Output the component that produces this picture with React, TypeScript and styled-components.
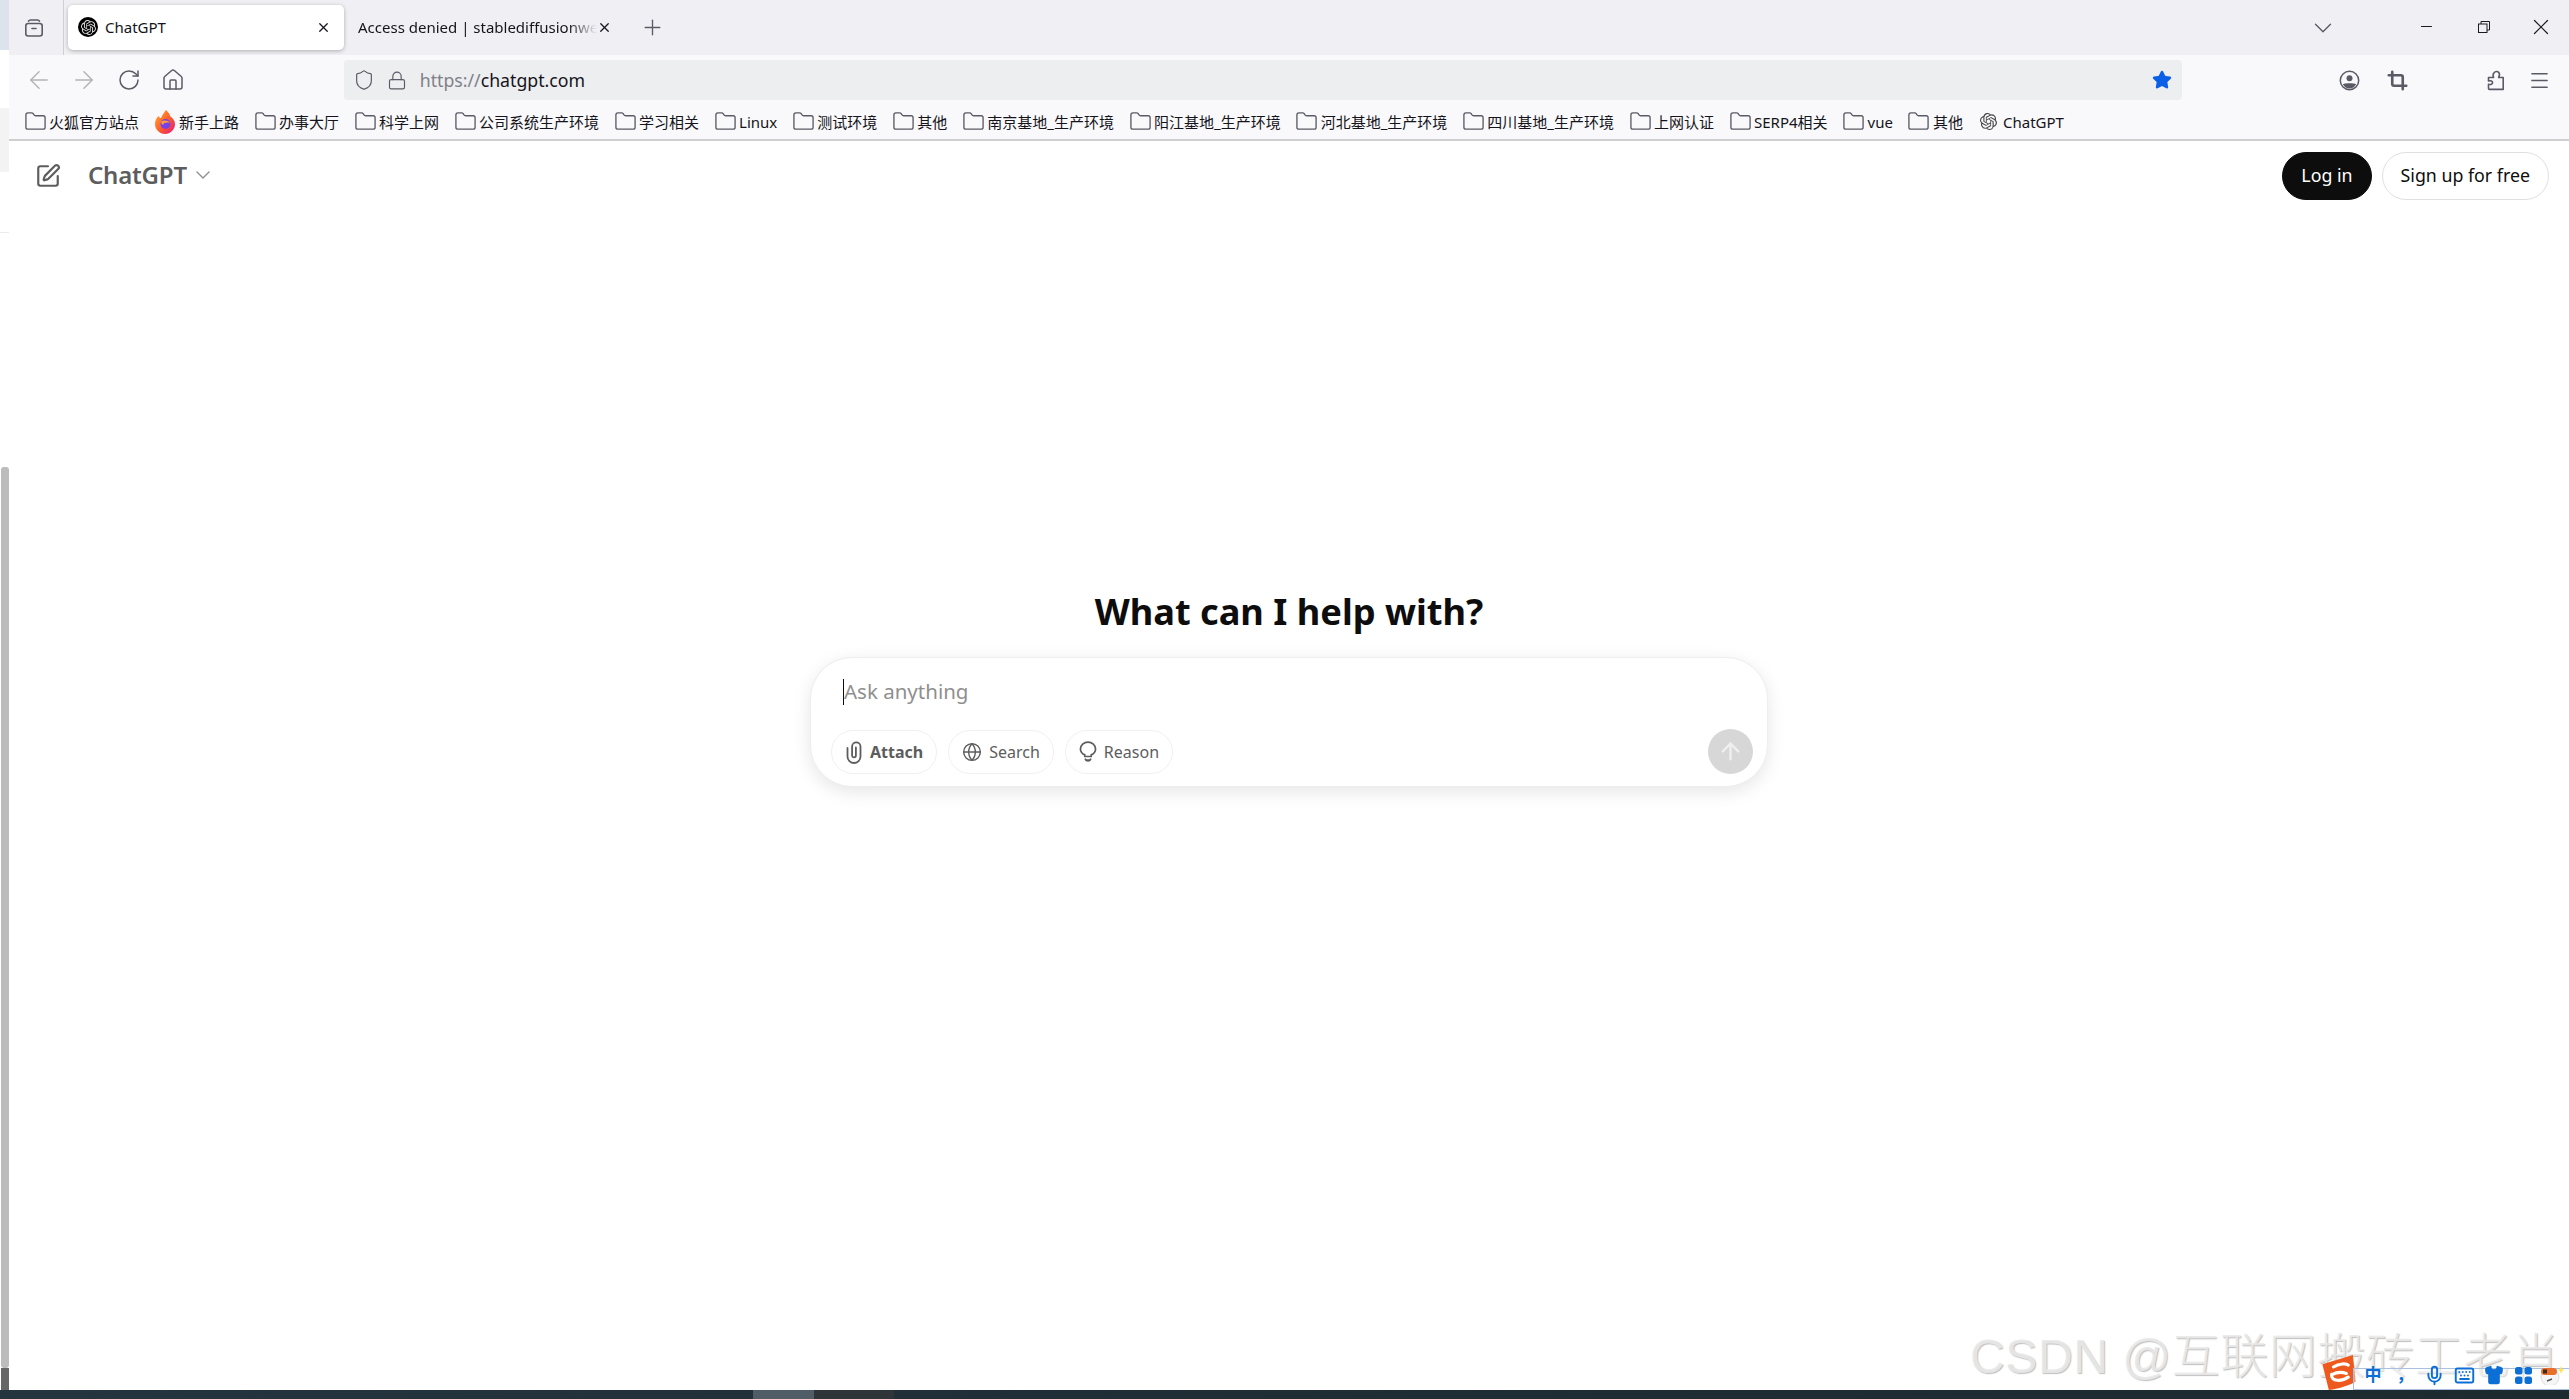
import React from "react";
import styled, { createGlobalStyle } from "styled-components";
import {
  ArrowLeft, ArrowRight, RotateCw, House, Shield, Lock, Star, Crop, Menu, Folder,
  ChevronDown, X, Plus, Minus, Globe, ArrowUp, SquarePen, Mic, Keyboard, Shirt,
} from "lucide-react";
import { SiOpenai } from "react-icons/si";

const Global = createGlobalStyle`
  html, body { margin: 0; padding: 0; background: #fff; overflow: hidden; }
  * { box-sizing: border-box; }
  body { font-family: "Noto Sans", "Noto Sans CJK SC", sans-serif; color: #15141a; }
`;

const Screen = styled.div`
  position: relative; width: 2569px; height: 1399px; display: flex; flex-direction: column; overflow: hidden;
`;
const Desktop = styled.div`display: flex; height: 1390px;`;
const Strip = styled.div`width: 9px; display: flex; flex-direction: column; flex: none;`;
const StripPart = styled.div<{ $h: number; $bg: string; $inset?: boolean; $round?: boolean }>`
  height: ${(p) => p.$h}px; background: ${(p) => p.$bg};
  margin-left: ${(p) => (p.$inset ? 1 : 0)}px;
  border-top-right-radius: ${(p) => (p.$round ? 6 : 0)}px;
`;
const ScrollThumb = styled.div`
  margin-left: 1px; height: 901px; background: #bcbcbc; border-radius: 3px;
`;
const Window = styled.div`flex: 1; display: flex; flex-direction: column; min-width: 0;`;

const TabBar = styled.div`height: 55px; background: #f0f0f4; display: flex; align-items: flex-start;`;
const TabMenu = styled.div`
  width: 55px; height: 55px; border-right: 1px solid #cfcfd8; display: flex; align-items: center; justify-content: center;
  color: #5b5b66; padding-right: 4px; flex: none;
`;
const Tab = styled.div<{ $active?: boolean }>`
  height: 45px; margin-top: 5px; display: flex; align-items: center; flex: none; font-size: 15px;
  width: ${(p) => (p.$active ? 276 : 274)}px;
  margin-left: ${(p) => (p.$active ? 4 : 0)}px;
  padding: ${(p) => (p.$active ? "0 13px 1px 10px" : "0 6px 1px 14px")};
  background: ${(p) => (p.$active ? "#fff" : "transparent")};
  border-radius: 5px;
  box-shadow: ${(p) => (p.$active ? "0 1px 4px rgba(0,0,0,.28)" : "none")};
`;
const Favicon = styled.span`
  width: 20px; height: 20px; border-radius: 50%; background: #000; color: #ddd; display: flex; align-items: center;
  justify-content: center; margin-right: 7px; flex: none;
`;
const TabTitle = styled.span<{ $fade?: boolean }>`
  flex: 1; white-space: nowrap; overflow: hidden; color: #15141a;
  ${(p) => p.$fade && "mask-image: linear-gradient(to right, #000 88%, transparent 100%);"}
`;
const NewTab = styled.div`
  width: 40px; height: 55px; margin-left: 14px; display: flex; align-items: center; justify-content: center; color: #5b5b66;
`;
const Grow = styled.div`flex: 1;`;
const ListTabs = styled.div`
  width: 40px; height: 55px; margin-right: 55px; display: flex; align-items: center; justify-content: center; color: #5b5b66;
`;
const WinControl = styled.div`
  width: 57px; height: 53px; display: flex; align-items: center; justify-content: center; color: #1a1a1a; flex: none;
`;

const NavBar = styled.div`height: 45px; background: #f9f9fb; display: flex; align-items: flex-end; padding: 0 2px 0 8px;`;
const NavButton = styled.div<{ $dim?: boolean; $w?: number }>`
  width: ${(p) => p.$w ?? 44.7}px; height: 40px; display: flex; align-items: center; justify-content: center; flex: none;
  color: ${(p) => (p.$dim ? "#b4b4b9" : "#5b5b66")};
`;
const Address = styled.div`
  width: 1838px; height: 40px; margin-left: 148px; background: #edeef0; border-radius: 4px; display: flex; align-items: center;
  padding: 0 10px 0 9px; color: #5b5b66; flex: none;
`;
const Url = styled.div`font-size: 17.7px; margin-left: 13px; flex: 1; color: #15141a;`;
const UrlScheme = styled.span`color: #80808a;`;
const AddrIcon = styled.span<{ $w: number }>`width: ${(p) => p.$w}px; display: flex; justify-content: center; flex: none;`;
const RightIcons = styled.div`display: flex; margin-left: 144px; align-items: center;`;

const Bookmarks = styled.div`
  height: 41px; background: #f9f9fb; border-bottom: 2px solid #cfcfd2; display: flex; align-items: center; gap: 16px; padding: 4px 0 0 16px;
`;
const Bookmark = styled.div`display: flex; align-items: center; gap: 4px; font-size: 15px; color: #15141a; white-space: nowrap; line-height: 20px;`;
const FolderIcon = styled(Folder)`color: #5b5b66; flex: none; margin: 0 -1.5px;`;
const BookmarkGlyph = styled.span`width: 20px; height: 20px; display: flex; align-items: center; justify-content: center; color: #444; flex: none;`;

const Page = styled.main`flex: 1; background: #fff; display: flex; flex-direction: column;`;
const Header = styled.header`display: flex; align-items: center; height: 48px; margin-top: 11px; padding: 0 20px 0 26px;`;
const EditButton = styled.div`width: 26px; color: #5d5d5d; display: flex; align-items: center; justify-content: center;`;
const ModelName = styled.div`
  margin-left: 27px; font-size: 24px; font-weight: 600; line-height: 32px; padding-bottom: 2px; color: #5d5d5d; display: flex; align-items: center; gap: 4px; letter-spacing: -0.2px;
`;
const Pill = styled.button<{ $dark?: boolean }>`
  height: 48px; border-radius: 24px; font: inherit; font-size: 17.8px; line-height: 22px; padding: 0 18px 3px; margin-left: 10px; cursor: pointer;
  background: ${(p) => (p.$dark ? "#0d0d0d" : "#fff")};
  color: ${(p) => (p.$dark ? "#fff" : "#0d0d0d")};
  border: 1px solid ${(p) => (p.$dark ? "#0d0d0d" : "#e0e0e0")};
`;
const Hero = styled.section`display: flex; flex-direction: column; align-items: center; padding-top: 386px;`;
const Heading = styled.h1`margin: 0 0 21px; font-size: 36.2px; line-height: 50px; font-weight: 700; color: #0d0d0d;`;
const Composer = styled.div`
  width: 958px; height: 130px; background: #fff; border: 1px solid #eeeeee; border-radius: 42px; position: relative;
  box-shadow: 0 5px 18px rgba(0,0,0,.1); padding: 21px 14px 0 20px; display: flex; flex-direction: column;
`;
const Prompt = styled.div`
  height: 26px; margin-left: 12px; border-left: 1px solid #0d0d0d; font-size: 20.5px; line-height: 24px; padding-bottom: 2px; color: #8f8f8f; display: flex; align-items: center;
`;
const Actions = styled.div`display: flex; align-items: center; margin-top: 24px;`;
const Chip = styled.div<{ $strong?: boolean }>`
  height: 44px; border: 1px solid #f1f1f1; border-radius: 22px; display: flex; align-items: center; gap: 7px; padding: 0 13px; margin-right: 11px;
  font-size: 16px; color: #5d5d5d; font-weight: ${(p) => (p.$strong ? 700 : 400)};
`;
const Send = styled.div`
  width: 45px; height: 45px; border-radius: 50%; background: #d7d7d7; color: #f0f0f0; margin-left: auto; display: flex; align-items: center; justify-content: center;
`;

const Taskbar = styled.footer`
  height: 9px; display: flex; background: linear-gradient(to right, #25353f, #1f2d35 50%, #1d2a30); overflow: hidden; position: relative;
`;
const TaskGap = styled.div<{ $w: number; $bg?: string }>`width: ${(p) => p.$w}px; background: ${(p) => p.$bg ?? "transparent"}; flex: none;`;
const Clock = styled.div`
  position: absolute; left: 2505px; top: 7px; color: #fff; font-size: 13px; line-height: 14px; letter-spacing: 1px;
`;

const Watermark = styled.div`
  position: absolute; left: 1970px; top: 1326px; font-size: 48px; line-height: 62px; white-space: nowrap; font-weight: 300;
  font-family: "Liberation Sans", "Noto Sans CJK SC", sans-serif; color: rgba(234,234,234,.9);
  text-shadow: 1px 1px 1px rgba(130,130,130,.5); letter-spacing: 0.6px;
`;
const ImeBar = styled.div`
  position: absolute; left: 2353px; top: 1368px; width: 216px; height: 22px; border: 1px solid #a9c0e0; border-right: none;
  background: rgba(255,255,255,.35); display: flex; align-items: center; padding: 0 0 8px 9px; color: #0c6fd6;
`;
const ImeSlot = styled.span<{ $w: number }>`
  width: ${(p) => p.$w}px; display: flex; justify-content: center; font-size: 17px; line-height: 18px; font-weight: 700; flex: none;
`;
const ImeLogo = styled.div`position: absolute; left: 2320px; top: 1354px; width: 38px; height: 37px;`;

const ArchiveIcon = () => (
  <svg width="20" height="20" viewBox="0 0 20 20" fill="none" stroke="currentColor" strokeWidth="1.6">
    <path d="M4.5 3.2 C5 2.4 5.6 2 6.5 2 H13.5 C14.4 2 15 2.4 15.5 3.2" strokeLinecap="round" />
    <rect x="1.8" y="5.5" width="16.4" height="12.5" rx="2.4" />
    <path d="M8 10.5 H12" strokeLinecap="round" />
  </svg>
);
const RestoreIcon = () => (
  <svg width="12" height="12" viewBox="0 0 12 12" fill="none" stroke="currentColor" strokeWidth="1">
    <rect x="0.5" y="3" width="8.5" height="8.5" />
    <path d="M3 3 V0.5 H11.5 V9 H9" />
  </svg>
);
const AccountIcon = () => (
  <svg width="21" height="21" viewBox="0 0 21 21" fill="none">
    <circle cx="10.5" cy="10.5" r="9.2" stroke="currentColor" strokeWidth="1.5" />
    <circle cx="10.5" cy="8.3" r="3" fill="currentColor" />
    <path d="M3.8 14.2 C6 12.8 15 12.8 17.2 14.2 C15.8 17 13 18.4 10.5 18.4 C8 18.4 5.2 17 3.8 14.2 Z" fill="currentColor" />
  </svg>
);
const PuzzleIcon = () => (
  <svg width="18" height="21" viewBox="0 0 18 21" fill="none" stroke="currentColor" strokeWidth="1.6" strokeLinejoin="round">
    <path d="M1.5 7.5 H6.6 C5.8 5.8 5.9 4 7 2.7 C8.2 1.2 10.6 1 11.8 2.6 C12.8 3.9 12.6 5.8 11.6 7.5 H16.2 V19.4 H2.4 C1.8 19.4 1.5 19 1.5 18.5 V14.2 C3.8 15 5.6 14 5.6 12.6 C5.6 11.2 3.8 10.4 1.5 11 Z" />
  </svg>
);
const ClipIcon = () => (
  <svg width="18" height="24" viewBox="0 0 18 24" fill="none" stroke="currentColor" strokeWidth="1.8" strokeLinecap="round">
    <path d="M2.5 8 V16.5 A6.5 6.5 0 0 0 15.5 16.5 V6.5 A4.2 4.2 0 0 0 7.1 6.5 V15.5 A1.9 1.9 0 0 0 10.9 15.5 V7.5" />
  </svg>
);
const BulbIcon = () => (
  <svg width="18" height="22" viewBox="0 0 20 24" fill="none" stroke="currentColor" strokeWidth="1.9" strokeLinecap="round" strokeLinejoin="round">
    <path d="M6.4 17 V15.2 C3.6 13.8 1.6 11.4 1.6 8.6 A8.4 7.6 0 0 1 18.4 8.6 C18.4 11.4 16.4 13.8 13.6 15.2 V17 Z" />
    <path d="M7 20 C8 22.6 12 22.6 13 20" fill="currentColor" />
  </svg>
);
const FirefoxIcon = () => (
  <svg width="20" height="24" viewBox="0 0 20 24">
    <defs>
      <linearGradient id="fx" x1="0" y1="0" x2="1" y2="1">
        <stop offset="0" stopColor="#ffb02e" />
        <stop offset="0.55" stopColor="#ff5a2c" />
        <stop offset="1" stopColor="#e31587" />
      </linearGradient>
    </defs>
    <path d="M11 0 C13 2 15 4 15 6 C18 8 20 11 20 14 C20 19.5 15.5 24 10 24 C4.5 24 0 19.5 0 14 C0 10 2 7 4 6 C4 7.5 5 8 6 8 C7 5 9 3 11 0 Z" fill="url(#fx)" />
    <circle cx="10.5" cy="14" r="5" fill="#7542e5" />
    <path d="M6 12 C8 10 13 10 15 13 C12 12 9 12.5 8 15 C7 14.5 6.4 13.5 6 12 Z" fill="#ff9a3c" />
  </svg>
);
const ImeMark = () => (
  <svg width="38" height="37" viewBox="0 0 38 40">
    <path d="M1 11 L34 1 L37 30 C26 36 14 38 8 39 Z" fill="#ee5a1e" />
    <path d="M13 14 C19 10 27 10 29 12 M11 22 C10 30 22 30 29 25 M12 22 C18 19 24 20 27 21" fill="none" stroke="#fff" strokeWidth="3.4" strokeLinecap="round" />
  </svg>
);
const GridIcon = () => (
  <svg width="17" height="17" viewBox="0 0 17 17" fill="currentColor">
    <rect x="0" y="0" width="7.5" height="7.5" rx="2.5" /><rect x="9.5" y="0" width="7.5" height="7.5" rx="2.5" />
    <rect x="0" y="9.5" width="7.5" height="7.5" rx="2.5" /><rect x="9.5" y="9.5" width="7.5" height="7.5" rx="2.5" />
  </svg>
);
const FoxIcon = () => (
  <svg width="26" height="20" viewBox="0 0 26 20">
    <circle cx="12" cy="12" r="9" fill="#f5f5f5" stroke="#ddd" />
    <rect x="3" y="3" width="16" height="7" rx="3.5" fill="#e8702a" />
    <rect x="5" y="4.5" width="4" height="4" fill="#3a2b20" />
    <path d="M23 1 L24 4 L26 5 L24 6 L23 9 L22 6 L20 5 L22 4 Z" fill="#ffe14d" />
    <path d="M9 16 L14 14" stroke="#555" strokeWidth="1.4" />
  </svg>
);

const folders = [
  "火狐官方站点", "*新手上路", "办事大厅", "科学上网", "公司系统生产环境", "学习相关", "Linux", "测试环境", "其他",
  "南京基地_生产环境", "阳江基地_生产环境", "河北基地_生产环境", "四川基地_生产环境", "上网认证", "SERP4相关", "vue", "其他",
];

export default function App() {
  return (
    <Screen>
      <Global />
      <Desktop>
        <Strip>
          <StripPart $h={50} $bg="#dde3ec" />
          <StripPart $h={58} $bg="#ffffff" $round />
          <StripPart $h={64} $bg="#f3f3f3" />
          <StripPart $h={60} $bg="#ffffff" />
          <StripPart $h={1} $bg="#ececec" />
          <StripPart $h={234} $bg="#ffffff" />
          <ScrollThumb />
          <StripPart $h={22} $bg="#666666" $inset />
        </Strip>
        <Window>
          <TabBar>
            <TabMenu><ArchiveIcon /></TabMenu>
            <Tab $active>
              <Favicon><SiOpenai size={15} /></Favicon>
              <TabTitle>ChatGPT</TabTitle>
              <X size={15} strokeWidth={2} />
            </Tab>
            <Tab>
              <TabTitle $fade>Access denied | stablediffusionweb.com</TabTitle>
              <X size={15} strokeWidth={2} />
            </Tab>
            <NewTab><Plus size={25} strokeWidth={1.3} /></NewTab>
            <Grow />
            <ListTabs><ChevronDown size={30} strokeWidth={1.1} /></ListTabs>
            <WinControl><Minus size={17} strokeWidth={1.7} /></WinControl>
            <WinControl><RestoreIcon /></WinControl>
            <WinControl><X size={26} strokeWidth={1.1} /></WinControl>
          </TabBar>
          <NavBar>
            <NavButton $dim><ArrowLeft size={28} strokeWidth={1.3} /></NavButton>
            <NavButton $dim><ArrowRight size={28} strokeWidth={1.3} /></NavButton>
            <NavButton><RotateCw size={24} strokeWidth={1.5} /></NavButton>
            <NavButton><House size={24} strokeWidth={1.5} /></NavButton>
            <Address>
              <AddrIcon $w={22}><Shield size={26} strokeWidth={1.3} /></AddrIcon>
              <AddrIcon $w={20} style={{ marginLeft: 12 }}><Lock size={23} strokeWidth={1.4} /></AddrIcon>
              <Url><UrlScheme>https://</UrlScheme>chatgpt.com</Url>
              <Star size={20} fill="#0a60e6" color="#0a60e6" />
            </Address>
            <RightIcons>
              <NavButton $w={48}><AccountIcon /></NavButton>
              <NavButton $w={48}><Crop size={21} strokeWidth={3} /></NavButton>
              <NavButton $w={48} style={{ marginLeft: 50 }}><PuzzleIcon /></NavButton>
              <NavButton $w={40}><Menu size={23} strokeWidth={1.4} /></NavButton>
            </RightIcons>
          </NavBar>
          <Bookmarks>
            {folders.map((name, i) =>
              name.startsWith("*") ? (
                <Bookmark key={i}><BookmarkGlyph><FirefoxIcon /></BookmarkGlyph>{name.slice(1)}</Bookmark>
              ) : (
                <Bookmark key={i}><FolderIcon size={23} strokeWidth={1.4} />{name}</Bookmark>
              ),
            )}
            <Bookmark><BookmarkGlyph><SiOpenai size={17} /></BookmarkGlyph>ChatGPT</Bookmark>
          </Bookmarks>
          <Page>
            <Header>
              <EditButton><SquarePen size={26} strokeWidth={2} /></EditButton>
              <ModelName>ChatGPT<ChevronDown size={24} strokeWidth={1.4} color="#8f8f8f" /></ModelName>
              <Grow />
              <Pill $dark>Log in</Pill>
              <Pill>Sign up for free</Pill>
            </Header>
            <Hero>
              <Heading>What can I help with?</Heading>
              <Composer>
                <Prompt>Ask anything</Prompt>
                <Actions>
                  <Chip $strong><ClipIcon />Attach</Chip>
                  <Chip><Globe size={20} strokeWidth={1.7} />Search</Chip>
                  <Chip><BulbIcon />Reason</Chip>
                  <Send><ArrowUp size={27} strokeWidth={2} /></Send>
                </Actions>
              </Composer>
            </Hero>
          </Page>
        </Window>
      </Desktop>
      <Taskbar>
        <TaskGap $w={753} />
        <TaskGap $w={61} $bg="#505c66" />
        <TaskGap $w={80} $bg="#2f3438" />
        <Clock>10:32</Clock>
      </Taskbar>
      <Watermark>CSDN @互联网搬砖工老肖</Watermark>
      <ImeLogo><ImeMark /></ImeLogo>
      <ImeBar>
        <ImeSlot $w={20}>中</ImeSlot>
        <ImeSlot $w={32} style={{ marginLeft: 6 }}>，</ImeSlot>
        <ImeSlot $w={27}><Mic size={21} strokeWidth={2.2} /></ImeSlot>
        <ImeSlot $w={32}><Keyboard size={21} strokeWidth={2.2} /></ImeSlot>
        <ImeSlot $w={28}><Shirt size={20} fill="currentColor" /></ImeSlot>
        <ImeSlot $w={30}><GridIcon /></ImeSlot>
        <ImeSlot $w={26}><FoxIcon /></ImeSlot>
      </ImeBar>
    </Screen>
  );
}
